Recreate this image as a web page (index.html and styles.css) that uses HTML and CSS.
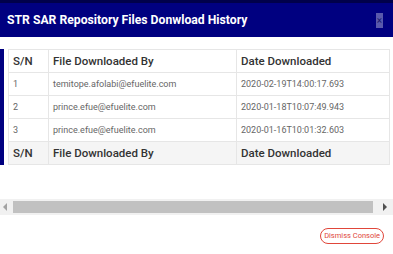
FILE: index.html
```html
<!DOCTYPE html>
<html>
<head>
<meta charset="utf-8">
<link rel="stylesheet" href="styles.css">
</head>
<body>
<div class="backdrop-strip"></div>
<header class="modal-header">
  <h1 class="modal-title">STR SAR Repository Files Donwload History</h1>
  <span class="close">×</span>
</header>
<main class="modal-body">
  <div class="table-wrap">
    <table class="history">
      <colgroup><col class="c-sn"><col class="c-by"><col class="c-date"></colgroup>
      <thead>
        <tr><th>S/N</th><th>File Downloaded By</th><th>Date Downloaded</th></tr>
      </thead>
      <tbody>
        <tr><td>1</td><td>temitope.afolabi@efuelite.com</td><td>2020-02-19T14:00:17.693</td></tr>
        <tr><td>2</td><td>prince.efue@efuelite.com</td><td>2020-01-18T10:07:49.943</td></tr>
        <tr><td>3</td><td>prince.efue@efuelite.com</td><td>2020-01-16T10:01:32.603</td></tr>
      </tbody>
      <tfoot>
        <tr><th>S/N</th><th>File Downloaded By</th><th>Date Downloaded</th></tr>
      </tfoot>
    </table>
  </div>
  <div class="hscroll">
    <span class="sb-btn sb-left"></span>
    <span class="sb-thumb"></span>
    <span class="sb-btn sb-right"></span>
  </div>
</main>
<footer class="modal-footer">
  <button class="dismiss">Dismiss Console</button>
</footer>
</body>
</html>
```
FILE: styles.css
```css
html, body {
  margin: 0;
  padding: 0;
  height: 254px;
  overflow: hidden;
  background: #fff;
  font-family: Roboto, "Liberation Sans", sans-serif;
}
.backdrop-strip {
  height: 3px;
  background: #00004a;
}
.modal-header {
  height: 34px;
  background: #000080;
  display: flex;
  align-items: center;
  justify-content: space-between;
  padding: 0 10px 0 7px;
}
.modal-title {
  margin: 0;
  color: #fff;
  font-size: 12.2px;
  font-weight: 700;
}
.close {
  width: 7px;
  height: 15px;
  background: rgba(255, 255, 255, 0.35);
  color: #1a1a70;
  font-size: 10px;
  line-height: 15px;
  text-align: center;
  overflow: hidden;
}
.modal-body {
  padding-top: 12px;
}
.table-wrap {
  border-left: 4px solid #000080;
  padding-left: 4px;
  display: flex;
}
.history {
  border-collapse: collapse;
  width: 381px;
  table-layout: fixed;
}
.c-sn { width: 40px; }
.c-by { width: 188px; }
.c-date { width: 153px; }
.history th, .history td {
  border: 1px solid #e6e6e6;
  height: 23px;
  padding: 0 4px;
  text-align: left;
  white-space: nowrap;
  box-sizing: border-box;
}
.history th {
  font-size: 11.5px;
  font-weight: 500;
  color: #333;
}
.history td {
  font-size: 9px;
  color: #666;
}
.history tfoot th {
  background: #f5f5f5;
}
.hscroll {
  margin-top: 34px;
  height: 16px;
  background: #f1f1f1;
  display: flex;
  align-items: center;
}
.sb-btn {
  position: relative;
  height: 16px;
}
.sb-left { width: 13px; }
.sb-right { flex: 1; }
.sb-left::after, .sb-right::after {
  content: "";
  position: absolute;
  top: 4px;
  width: 0;
  height: 0;
  border-top: 4px solid transparent;
  border-bottom: 4px solid transparent;
}
.sb-left::after {
  left: 3px;
  border-right: 4px solid #a3a3a3;
}
.sb-right::after {
  left: 10px;
  border-left: 4px solid #505050;
}
.sb-thumb {
  width: 360px;
  height: 12px;
  background: #c1c1c1;
}
.modal-footer {
  display: flex;
  justify-content: flex-end;
  padding: 13px 9px 0 0;
}
.dismiss {
  margin: 0;
  height: 16px;
  padding: 0 3px;
  border: 1px solid #e0463a;
  border-radius: 8px;
  background: #fff;
  color: #e0463a;
  font-family: Roboto, "Liberation Sans", sans-serif;
  font-size: 7.5px;
  line-height: 14px;
}
```
